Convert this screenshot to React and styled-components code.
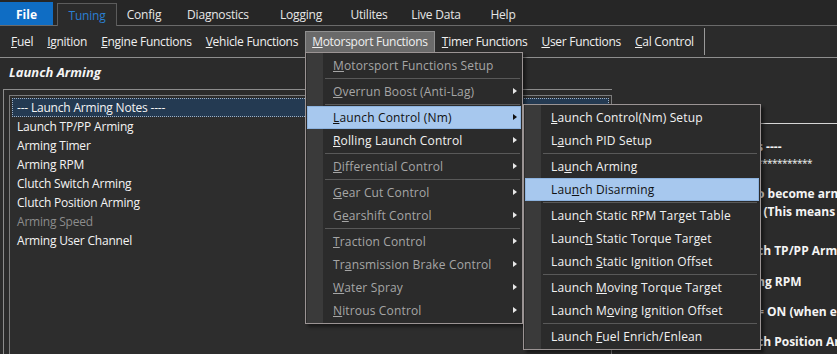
import styled, { createGlobalStyle } from "styled-components";

const Global = createGlobalStyle`
  html, body { margin: 0; padding: 0; background: #2b2b2b; }
  body {
    font-family: "Open Sans", "Noto Sans", sans-serif;
    font-size: 12px;
    color: #f0f0f0;
    overflow: hidden;
  }
`;

const Window = styled.div`
  position: relative;
  width: 837px;
  height: 354px;
  overflow: hidden;
  background: #2b2b2b;
  display: flex;
  flex-direction: column;
`;

const TabBar = styled.div`
  height: 25px;
  display: flex;
  align-items: flex-end;
  background: #262626;
  border-bottom: 1px solid #6a6a6a;
`;

const FileTab = styled.div`
  width: 53px;
  height: 23px;
  line-height: 25px;
  text-align: center;
  background: #0f6dc4;
  color: #fff;
  font-weight: bold;
`;

const Tab = styled.div`
  flex: 0 0 ${(p) => p.$w}px;
  box-sizing: border-box;
  height: ${(p) => (p.$active ? "23px" : "24px")};
  line-height: ${(p) => (p.$active ? "23px" : "28px")};
  text-align: center;
  letter-spacing: -0.2px;
  margin-left: ${(p) => (p.$active ? "4px" : "0")};
  color: ${(p) => (p.$active ? "#2a7fd2" : "#e6e6e6")};
  background: ${(p) => (p.$active ? "#2b2b2b" : "transparent")};
  border: ${(p) => (p.$active ? "1px solid #5c5c5c" : "none")};
  border-bottom: none;
  margin-bottom: ${(p) => (p.$active ? "-1px" : "0")};
`;

const MenuBar = styled.div`
  height: 31px;
  display: flex;
  align-items: center;
  padding-left: 4px;
  border-bottom: 1px solid #8e8e8e;
  letter-spacing: -0.28px;
`;

const MenuBarItem = styled.div`
  height: 22px;
  line-height: 20px;
  padding: 0 6px;
  border: 1px solid ${(p) => (p.$open ? "#8f8f8f" : "transparent")};
  background: ${(p) => (p.$open ? "#6a6a6a" : "transparent")};
  color: #f0f0f0;
  box-sizing: border-box;
  white-space: nowrap;
`;

const BarDivider = styled.div`
  width: 1px;
  height: 27px;
  margin-left: 3px;
  background: #9a9a9a;
`;

const PageTitle = styled.div`
  height: 31px;
  line-height: 29px;
  padding-left: 9px;
  font-size: 13px;
  font-weight: bold;
  font-style: italic;
  color: #f4f4f4;
`;

const Body = styled.div`
  flex: 1;
  display: flex;
  min-height: 0;
`;

const GroupBox = styled.div`
  flex: 0 0 603px;
  margin-left: 3px;
  border-top: 1px solid #8c8c8c;
  border-left: 1px solid #8c8c8c;
  padding: 5px 0 0 5px;
  display: flex;
`;

const TreeList = styled.div`
  flex: 1;
  border: 1px solid #7c7c7c;
  border-bottom: none;
  padding: 2px 2px 0;
  background: #2d2d2d;
  letter-spacing: -0.2px;
`;

const TreeRow = styled.div`
  height: 19px;
  line-height: 17px;
  padding-left: 4px;
  border: 1px ${(p) => (p.$selected ? "dotted #9fb0c4" : "solid transparent")};
  background: ${(p) => (p.$selected ? "#243a52" : "transparent")};
  color: ${(p) => (p.$dim ? "#8c8c8c" : "#f4f4f4")};
  box-sizing: border-box;
  white-space: nowrap;
`;

const NotesPanel = styled.div`
  flex: 1;
  min-width: 0;
  overflow: hidden;
  font-weight: bold;
  color: #f4f4f4;
`;

const NotesHead = styled.div`
  height: 34px;
  border-bottom: 1px solid #d6d6d6;
`;

const NoteLine = styled.div`
  display: flex;
  height: 16px;
  line-height: 16px;
  margin-top: ${(p) => p.$gap || 0}px;
  white-space: nowrap;
  font-size: ${(p) => (p.$small ? "10px" : "12px")};
  font-weight: ${(p) => (p.$small ? "normal" : "bold")};
  letter-spacing: ${(p) => (p.$small ? "-0.5px" : "0")};
`;

const NoteLead = styled.span`
  flex: 0 0 145px;
  display: flex;
  justify-content: flex-end;
  overflow: hidden;
`;

const Menu = styled.div`
  position: absolute;
  left: ${(p) => p.$left}px;
  top: ${(p) => p.$top}px;
  width: ${(p) => p.$width}px;
  box-sizing: border-box;
  border: 1px solid #9b9494;
  padding: 1px;
  background: linear-gradient(
    to right,
    #2b2b2b 1px,
    #3a3a3a 1px,
    #3a3a3a 17px,
    #2b2b2b 17px
  );
  box-shadow: 3px 3px 3px rgba(0, 0, 0, 0.45);
  z-index: ${(p) => p.$z};
  letter-spacing: 0.15px;
`;

const MenuItem = styled.div`
  position: relative;
  height: 23px;
  line-height: 21px;
  padding-left: 25px;
  border: 1px solid ${(p) => (p.$hot ? "#8db3df" : "transparent")};
  background: ${(p) => (p.$hot ? "#a7c8ee" : "transparent")};
  color: ${(p) => (p.$hot ? "#111" : p.$dim ? "#a6a6a6" : "#f2f2f2")};
  box-sizing: border-box;
  white-space: nowrap;
`;

const SubArrow = styled.span`
  position: absolute;
  right: 3px;
  top: 7px;
  width: 0;
  height: 0;
  border-top: 3.5px solid transparent;
  border-bottom: 3.5px solid transparent;
  border-left: 4px solid ${(p) => (p.$hot ? "#111" : "#e8e8e8")};
`;

const MenuSep = styled.div`
  height: 3px;
  display: flex;
  align-items: center;
  margin: 0 ${(p) => p.$right}px 0 18px;
  &::after {
    content: "";
    flex: 1;
    height: 1px;
    background: #595959;
  }
`;

const tabs = [
  ["Config", 54],
  ["Diagnostics", 94],
  ["Logging", 72],
  ["Utilites", 64],
  ["Live Data", 70],
  ["Help", 64],
];

const barItems = [
  ["F", "uel"],
  ["I", "gnition"],
  ["E", "ngine Functions"],
  ["V", "ehicle Functions"],
  ["M", "otorsport Functions", true],
  ["T", "imer Functions"],
  ["U", "ser Functions"],
  ["C", "al Control"],
];

const treeRows = [
  { label: "--- Launch Arming Notes ----", selected: true },
  { label: "Launch TP/PP Arming" },
  { label: "Arming Timer" },
  { label: "Arming RPM" },
  { label: "Clutch Switch Arming" },
  { label: "Clutch Position Arming" },
  { label: "Arming Speed", dim: true },
  { label: "Arming User Channel" },
];

const notes = [
  { gap: 15, lead: "---- Launch Arming Note", tail: "s ----" },
  { gap: 0, lead: "********************", tail: "***********", small: true },
  { gap: 15, lead: "For launch control t", tail: "o become armed" },
  { gap: 2, lead: "all conditions must be met", tail: ". (This means all" },
  { gap: 23, lead: "Laun", tail: "ch TP/PP Arming" },
  { gap: 15, lead: "Armi", tail: "ng RPM" },
  { gap: 14, lead: "Clutch Switch ", tail: "= ON (when enabled)" },
  { gap: 14, lead: "Clut", tail: "ch Position Arming" },
];

// [before, key, after, dim, submenu, hot] ; "-" = separator
const motorsportMenu = [
  ["", "M", "otorsport Functions Setup", true, false],
  "-",
  ["", "O", "verrun Boost (Anti-Lag)", true, true],
  "-",
  ["", "L", "aunch Control (Nm)", false, true, true],
  ["", "R", "olling Launch Control", false, true],
  "-",
  ["", "D", "ifferential Control", true, true],
  "-",
  ["", "G", "ear Cut Control", true, true],
  ["G", "e", "arshift Control", true, true],
  "-",
  ["", "T", "raction Control", true, true],
  ["Tr", "a", "nsmission Brake Control", true, true],
  ["", "W", "ater Spray", true, true],
  ["", "N", "itrous Control", true, true],
];

const launchMenu = [
  ["", "L", "aunch Control(Nm) Setup"],
  ["L", "a", "unch PID Setup"],
  "-",
  ["La", "u", "nch Arming"],
  ["Lau", "n", "ch Disarming", false, false, true],
  "-",
  ["Laun", "c", "h Static RPM Target Table"],
  ["Launc", "h", " Static Torque Target"],
  ["Launch ", "S", "tatic Ignition Offset"],
  "-",
  ["Launch ", "M", "oving Torque Target"],
  ["Launch M", "o", "ving Ignition Offset"],
  "-",
  ["Launch ", "F", "uel Enrich/Enlean"],
];

const DropMenu = ({ items, left, top, width, z, sepRight }) => (
  <Menu $left={left} $top={top} $width={width} $z={z}>
    {items.map((it, i) =>
      it === "-" ? (
        <MenuSep key={i} $right={sepRight} />
      ) : (
        <MenuItem key={i} $dim={it[3]} $hot={it[5]}>
          {it[0]}
          <u>{it[1]}</u>
          {it[2]}
          {it[4] && <SubArrow $hot={it[5]} />}
        </MenuItem>
      )
    )}
  </Menu>
);

export default function App() {
  return (
    <Window>
      <Global />
      <TabBar>
        <FileTab>File</FileTab>
        <Tab $active $w={60}>
          Tuning
        </Tab>
        {tabs.map(([t, w]) => (
          <Tab key={t} $w={w}>
            {t}
          </Tab>
        ))}
      </TabBar>
      <MenuBar>
        {barItems.map(([k, rest, open]) => (
          <MenuBarItem key={k + rest} $open={open}>
            <u>{k}</u>
            {rest}
          </MenuBarItem>
        ))}
        <BarDivider />
      </MenuBar>
      <PageTitle>Launch Arming</PageTitle>
      <Body>
        <GroupBox>
          <TreeList>
            {treeRows.map((r) => (
              <TreeRow key={r.label} $selected={r.selected} $dim={r.dim}>
                {r.label}
              </TreeRow>
            ))}
          </TreeList>
        </GroupBox>
        <NotesPanel>
          <NotesHead />
          {notes.map((n, i) => (
            <NoteLine key={i} $gap={n.gap} $small={n.small}>
              <NoteLead>{n.lead}</NoteLead>
              {n.tail}
            </NoteLine>
          ))}
        </NotesPanel>
      </Body>
      <DropMenu items={motorsportMenu} left={305} top={52} width={218} z={2} sepRight={1} />
      <DropMenu items={launchMenu} left={523} top={104} width={238} z={3} sepRight={2} />
    </Window>
  );
}
